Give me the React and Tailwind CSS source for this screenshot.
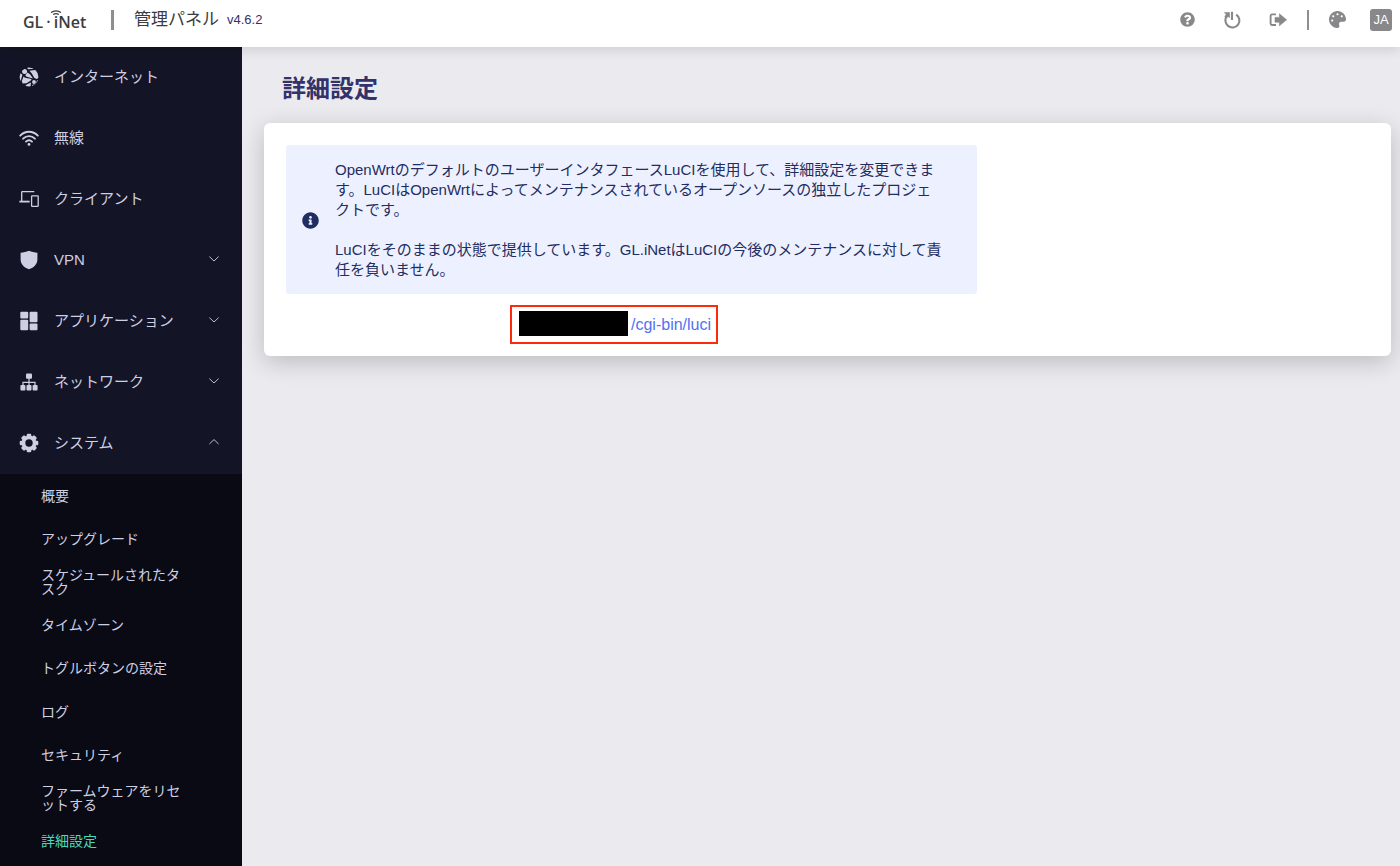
import React from 'react';
import { FaQuestionCircle, FaPalette, FaInfoCircle } from 'react-icons/fa';

function GlobeIcon() {
  return (
    <svg viewBox="0 0 20 20" className="size-5" aria-hidden="true">
      <clipPath id="globe-disc">
        <circle cx="10" cy="10" r="9.4" />
      </clipPath>
      <g fill="currentColor" clipPath="url(#globe-disc)">
        <circle cx="5.6" cy="4.4" r="2.5" />
        <path d="M7.6 0 H13.6 L15 1.8 L9 2.2 Z" />
        <path d="M0 6 L1.8 6.4 L3.4 7.8 L1.8 13.6 L0 14 Z" />
        <path d="M8.6 5.6 L11.2 7.4 L14 11.4 L10.4 10.4 L7 9.6 L6.4 8 Z" />
        <path d="M10.4 3.8 L16 3 L20 5 V11 L17.4 12 L15.2 10.8 L12.8 6.6 Z" />
        <path d="M4.6 9.6 L6 10.8 L12.6 12 L11.8 13.6 L7.6 16.2 L3.6 16.4 L2.8 14 Z" />
        <path d="M8.2 17.2 L12 15.6 L11.4 20 H5 Z" />
        <circle cx="15" cy="15" r="1.9" />
        <path d="M18 13.4 L20 12.4 V17 L15 19.6 L13 20 L13.4 17.8 L16.4 17.2 Z" />
      </g>
    </svg>
  );
}

function WifiIcon() {
  return (
    <svg viewBox="0 0 20 20" className="size-5" aria-hidden="true">
      <g fill="none" stroke="currentColor" strokeWidth="1.9" strokeLinecap="round">
        <path d="M1.2 7.6 C6.2 2.4 13.8 2.4 18.8 7.6" />
        <path d="M4.1 10.7 C7.5 7.2 12.5 7.2 15.9 10.7" />
        <path d="M7 13.6 C8.8 11.9 11.2 11.9 13 13.6" />
      </g>
      <circle cx="10" cy="16.4" r="1.4" fill="currentColor" />
    </svg>
  );
}

function DevicesIcon() {
  return (
    <svg viewBox="0 0 20 20" className="size-5" aria-hidden="true" fill="none" stroke="currentColor">
      <path d="M2.7 12 V3.2 Q2.7 2.6 3.3 2.6 H15.3" strokeWidth="1.3" />
      <path d="M0.4 12.6 H10.6" strokeWidth="1.8" />
      <rect x="12.6" y="6.8" width="6.6" height="10.6" rx="0.6" strokeWidth="1.3" />
    </svg>
  );
}

function ShieldIcon() {
  return (
    <svg viewBox="0 0 20 20" className="size-5" aria-hidden="true">
      <path fill="currentColor" d="M10 0.8 C12.6 1.9 15.6 2.6 18.4 2.8 V9.4 C18.4 13.8 15 17.6 10 19.2 C5 17.6 1.6 13.8 1.6 9.4 V2.8 C4.4 2.6 7.4 1.9 10 0.8 Z" />
    </svg>
  );
}

function TilesIcon() {
  return (
    <svg viewBox="0 0 20 20" className="size-5" aria-hidden="true" fill="currentColor">
      <rect x="1.3" y="0.8" width="7.9" height="6.6" rx="1" />
      <rect x="10.6" y="0.8" width="7.9" height="10.4" rx="1" />
      <rect x="1.3" y="8.8" width="7.9" height="10.4" rx="1" />
      <rect x="10.6" y="12.6" width="7.9" height="6.6" rx="1" />
    </svg>
  );
}

function TreeIcon() {
  return (
    <svg viewBox="0 0 20 20" className="size-5" aria-hidden="true" fill="currentColor">
      <rect x="7" y="1.4" width="6" height="5.4" rx="1" />
      <path d="M10 6 V14 M4 14 V10.4 H16 V14" fill="none" stroke="currentColor" strokeWidth="1.2" />
      <rect x="1.4" y="13" width="5" height="5.4" rx="0.9" />
      <rect x="7.5" y="13" width="5" height="5.4" rx="0.9" />
      <rect x="13.6" y="13" width="5" height="5.4" rx="0.9" />
    </svg>
  );
}

function GearIcon() {
  return (
    <svg viewBox="0 0 20 20" className="size-5" aria-hidden="true">
      <g fill="currentColor">
        {[0, 45, 90, 135].map((angle) => (
          <rect key={angle} x="7.7" y="0.7" width="4.6" height="18.6" rx="1.2" transform={`rotate(${angle} 10 10)`} />
        ))}
        <circle cx="10" cy="10" r="7.4" />
      </g>
      <circle cx="10" cy="10" r="3.7" fill="#131425" />
    </svg>
  );
}

function Chevron({ up }) {
  return (
    <svg viewBox="0 0 12 12" className="size-3" aria-hidden="true" fill="none" stroke="currentColor" strokeWidth="0.9">
      <path d={up ? 'M1.4 8 L6 3.6 L10.6 8' : 'M1.4 3.6 L6 8 L10.6 3.6'} />
    </svg>
  );
}

function RebootIcon() {
  return (
    <svg viewBox="0 0 18 18" className="size-[18px]" aria-hidden="true" fill="none" stroke="currentColor" strokeWidth="2.1">
      <path d="M13.2 3.6 A7 7 0 1 1 4.2 4.8" />
      <path d="M9 0.8 V9" />
      <path d="M0.8 1.2 H6.8 V7.2 L4.8 5.4 L3 7 L1.4 5.4 L3 3.6 Z" fill="currentColor" stroke="none" />
    </svg>
  );
}

function LogoutIcon() {
  return (
    <svg viewBox="0 0 18 18" className="size-[18px]" aria-hidden="true">
      <path d="M7 3.4 H3.2 Q1.6 3.4 1.6 5 V12.4 Q1.6 14 3.2 14 H7" fill="none" stroke="currentColor" strokeWidth="1.9" />
      <path d="M6 6.4 H10.4 V2.8 L17.6 8.8 L10.4 14.8 V11.2 H6 Z" fill="currentColor" stroke="currentColor" strokeWidth="0.6" strokeLinejoin="round" />
    </svg>
  );
}

const menu = [
  { label: 'インターネット', icon: GlobeIcon },
  { label: '無線', icon: WifiIcon },
  { label: 'クライアント', icon: DevicesIcon },
  { label: 'VPN', icon: ShieldIcon, group: true },
  { label: 'アプリケーション', icon: TilesIcon, group: true },
  { label: 'ネットワーク', icon: TreeIcon, group: true },
  { label: 'システム', icon: GearIcon, group: true, open: true },
];

const submenu = [
  '概要',
  'アップグレード',
  'スケジュールされたタスク',
  'タイムゾーン',
  'トグルボタンの設定',
  'ログ',
  'セキュリティ',
  'ファームウェアをリセットする',
  '詳細設定',
];

function Header() {
  return (
    <header className="relative z-10 flex h-[47px] items-center justify-between bg-white pr-2 pb-2 pl-[23px] shadow-[0_2px_12px_rgba(0,0,0,0.14)]">
      <div className="flex items-center">
        <a href="#home" className="mt-1 w-[88px] font-['Open_Sans',sans-serif] text-[16px] leading-5 font-semibold text-[#3c3c3c]">
          GL<span className="px-[3px]">·</span>
          <span className="relative">
            iNet
            <svg viewBox="0 0 12 5" className="absolute -top-px -left-1 h-[5px] w-3" aria-hidden="true" fill="none" stroke="currentColor" strokeWidth="1.2">
              <path d="M1 2.6 Q6 -0.8 11 2.6 M3.2 4.6 Q6 2.6 8.8 4.6" />
            </svg>
          </span>
        </a>
        <span className="h-5 w-[3px] bg-[#8f8f90]" />
        <span className="ml-5 text-[17px] leading-6 text-[#3c3c3c]">管理パネル</span>
        <span className="ml-2 text-[13px] leading-6 text-[#34326a]">v4.6.2</span>
      </div>
      <div className="flex items-center text-[#88888a]">
        <button type="button" aria-label="ヘルプ"><FaQuestionCircle size={15} /></button>
        <button type="button" aria-label="再起動" className="ml-7"><RebootIcon /></button>
        <button type="button" aria-label="ログアウト" className="ml-7"><LogoutIcon /></button>
        <span className="ml-5 h-5 w-0.5 bg-[#8f8f90]" />
        <button type="button" aria-label="テーマ" className="ml-5"><FaPalette size={17} /></button>
        <button type="button" className="ml-6 h-[22px] w-[22px] rounded-[3px] bg-[#88888a] text-[13px] leading-[22px] text-white">JA</button>
      </div>
    </header>
  );
}

function Sidebar() {
  return (
    <nav className="flex w-[242px] shrink-0 flex-col bg-[#131425] text-[#cfcfe3]">
      {menu.map(({ label, icon: Icon, group, open }) => (
        <button key={label} type="button" aria-expanded={group ? !!open : undefined} className="flex h-[61px] items-center pr-[22px] pl-[19px] text-left text-[15px]">
          <span className="pb-0.5"><Icon /></span>
          <span className="ml-[15px] flex-1">{label}</span>
          {group && <span className="pb-[3px]"><Chevron up={open} /></span>}
        </button>
      ))}
      <ul className="flex flex-1 flex-col bg-[#090a14] pb-[3px] text-[14px] leading-[14px]">
        {submenu.map((label) => (
          <li key={label} className="flex min-h-[43px] flex-1 items-center pr-[58px] pl-[41px]">
            <a href="#system" className={label === '詳細設定' ? 'break-all text-[#4bd8bd]' : 'break-all'}>{label}</a>
          </li>
        ))}
      </ul>
    </nav>
  );
}

export default function App() {
  return (
    <div lang="ja" className="flex min-h-screen flex-col bg-[#ebebef] font-['Liberation_Sans','Noto_Sans_CJK_JP',sans-serif]">
      <Header />
      <div className="flex flex-1">
        <Sidebar />
        <main className="min-w-0 flex-1 pr-[9px] pl-[22px]">
          <h1 className="px-[18px] pt-[26px] pb-[18px] text-[24px] leading-8 font-bold text-[#34326a]">詳細設定</h1>
          <section className="rounded-md bg-white p-[22px] pb-3 shadow-[0_6px_24px_rgba(0,0,0,0.2)]">
            <div className="flex max-w-[691px] items-center rounded-[3px] bg-[#edf1ff] pt-[15px] pr-8 pb-[14px] pl-4 text-[15px] leading-5 text-[#1f2d61]">
              <FaInfoCircle size={17} className="shrink-0" />
              <div className="ml-4 flex flex-1 flex-col gap-5">
                <p>OpenWrtのデフォルトのユーザーインタフェースLuCIを使用して、詳細設定を変更できます。LuCIはOpenWrtによってメンテナンスされているオープンソースの独立したプロジェクトです。</p>
                <p>LuCIをそのままの状態で提供しています。GL.iNetはLuCIの今後のメンテナンスに対して責任を負いません。</p>
              </div>
            </div>
            <div className="mt-[11px] ml-56 flex h-[39px] w-[208px] items-start border-2 border-[#fb2b0b] pt-1 pl-[7px]">
              <span className="h-[25px] w-[109px] bg-black" />
              <a href="#luci" className="ml-[3px] text-[16px] leading-7 text-[#5272f2]">/cgi-bin/luci</a>
            </div>
          </section>
        </main>
      </div>
    </div>
  );
}
